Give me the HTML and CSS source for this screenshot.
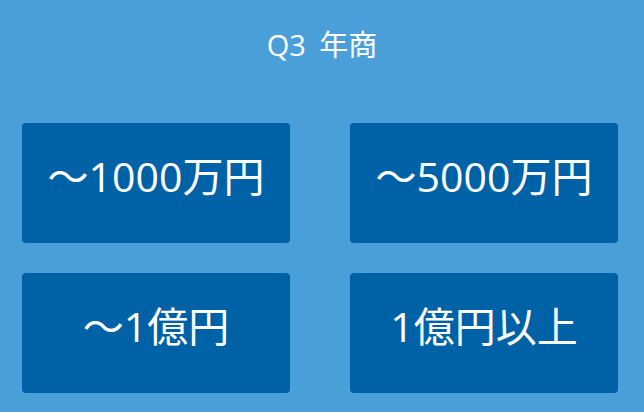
FILE: index.html
```html
<!DOCTYPE html>
<html lang="ja">
<head>
<meta charset="utf-8">
<title>Q3 年商</title>
<link rel="stylesheet" href="styles.css">
</head>
<body>
<main class="panel">
  <h1 class="question">Q3 年商</h1>
  <div class="choices">
    <button class="choice" type="button">〜1000万円</button>
    <button class="choice" type="button">〜5000万円</button>
    <button class="choice" type="button">〜1億円</button>
    <button class="choice" type="button">1億円以上</button>
  </div>
</main>
</body>
</html>
```

FILE: styles.css
```css
html, body {
  margin: 0;
  padding: 0;
  height: 100%;
}

body {
  background: #4a9fd8;
  font-family: "Open Sans", "Noto Sans CJK JP", sans-serif;
  color: #ffffff;
}

.panel {
  padding: 25px 26px 0 22px;
}

.question {
  margin: 0;
  height: 40px;
  line-height: 40px;
  font-size: 29px;
  font-weight: 400;
  word-spacing: 6px;
  text-align: center;
  padding-left: 4px;
}

.choices {
  margin-top: 58px;
  display: grid;
  grid-template-columns: 268px 268px;
  grid-auto-rows: 120px;
  column-gap: 60px;
  row-gap: 30px;
}

.choice {
  border: none;
  margin: 0;
  padding: 0 0 18px;
  background: #0062a6;
  border-radius: 4px;
  color: #ffffff;
  font-family: inherit;
  font-size: 41px;
  font-weight: 400;
  display: flex;
  align-items: center;
  justify-content: center;
}
```
